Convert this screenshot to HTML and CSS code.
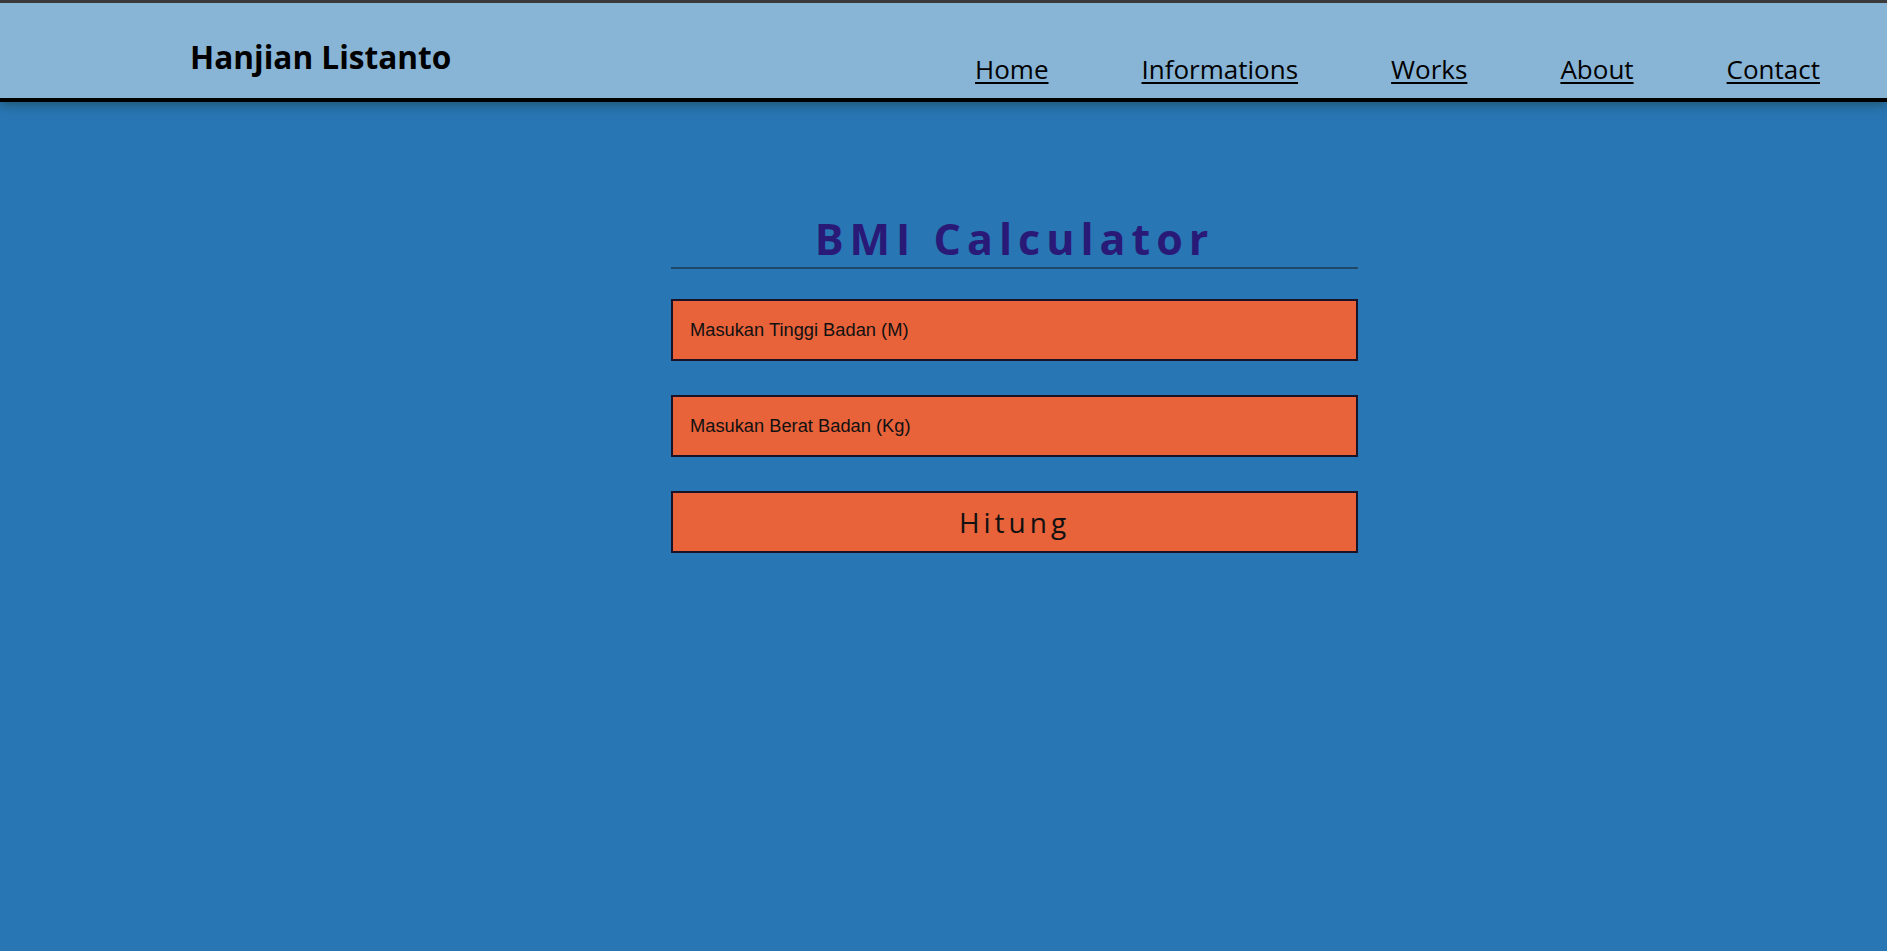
FILE: index.html
```html
<!DOCTYPE html>
<html lang="id">
<head>
<meta charset="utf-8">
<title>BMI Calculator</title>
<link rel="stylesheet" href="styles.css">
</head>
<body>
<header class="site-header">
  <h1 class="logo">Hanjian Listanto</h1>
  <nav class="nav">
    <a href="#" class="nav-link">Home</a>
    <a href="#" class="nav-link">Informations</a>
    <a href="#" class="nav-link">Works</a>
    <a href="#" class="nav-link">About</a>
    <a href="#" class="nav-link">Contact</a>
  </nav>
</header>
<main class="main">
  <section class="calc">
    <h2 class="calc-title">BMI Calculator</h2>
    <input class="field" type="text" placeholder="Masukan Tinggi Badan (M)">
    <input class="field" type="text" placeholder="Masukan Berat Badan (Kg)">
    <button class="btn" type="button">Hitung</button>
  </section>
</main>
</body>
</html>
```
FILE: styles.css
```css
html, body {
  margin: 0;
  padding: 0;
}
body {
  background: #2876b4;
  min-height: 951px;
  font-family: "Open Sans", "Noto Sans", sans-serif;
}
.site-header {
  position: relative;
  z-index: 1;
  display: flex;
  justify-content: space-between;
  align-items: flex-start;
  box-sizing: border-box;
  height: 102px;
  border-top: 3px solid #3a3a3a;
  border-bottom: 4px solid #000;
  background: #88b4d5;
  padding: 0 67px 0 190px;
  box-shadow: 0 3px 10px rgba(30, 60, 60, 0.55);
}
.logo {
  margin: 0;
  padding-top: 38px;
  font-size: 31.6px;
  line-height: 1;
  font-weight: 700;
  color: #000;
}
.nav {
  display: flex;
  gap: 93px;
  padding-top: 53px;
}
.nav-link {
  font-size: 26px;
  line-height: 1;
  color: #000;
  text-decoration: underline;
  text-decoration-thickness: 2px;
  text-underline-offset: 3px;
}
.main {
  padding-left: 671px;
}
.calc {
  width: 687px;
  display: flex;
  flex-direction: column;
}
.calc-title {
  margin: 0;
  margin-top: 115px;
  padding-bottom: 7px;
  border-bottom: 2px solid #1f4868;
  text-align: center;
  font-size: 43px;
  line-height: 1;
  font-weight: 700;
  letter-spacing: 6px;
  color: #2a1a78;
}
.field {
  box-sizing: border-box;
  height: 62px;
  margin: 30px 0 0;
  padding: 0 17px;
  border: 2px solid #1a1226;
  background: #e8623a;
  font-family: "Liberation Sans", Arial, sans-serif;
  font-size: 18.3px;
  color: #111;
  outline: none;
}
.field + .field {
  margin-top: 34px;
}
.field::placeholder {
  color: #111;
  opacity: 1;
}
.btn {
  box-sizing: border-box;
  height: 62px;
  margin-top: 34px;
  border: 2px solid #1a1226;
  background: #e8623a;
  font-family: "Open Sans", "Noto Sans", sans-serif;
  font-size: 28px;
  letter-spacing: 4px;
  color: #111;
  cursor: pointer;
}
```
